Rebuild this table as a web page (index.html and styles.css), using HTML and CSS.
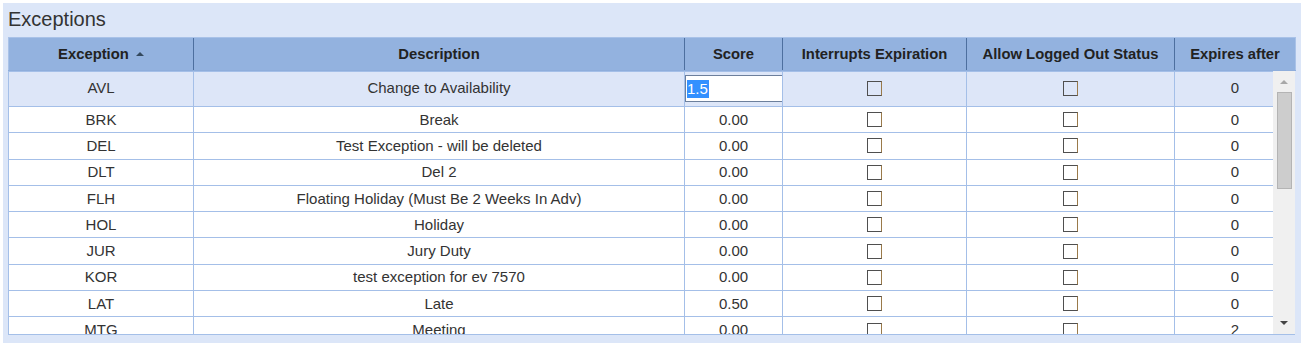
FILE: index.html
```html
<!DOCTYPE html>
<html>
<head>
<meta charset="utf-8">
<link rel="stylesheet" href="styles.css">
</head>
<body>
<div class="panel">
  <div class="title">Exceptions</div>
  <div class="grid">
    <table class="head">
      <colgroup><col class="c1"><col class="c2"><col class="c3"><col class="c4"><col class="c5"><col class="c6"></colgroup>
      <tr>
        <th>Exception <span class="sort"></span></th>
        <th>Description</th>
        <th>Score</th>
        <th>Interrupts Expiration</th>
        <th>Allow Logged Out Status</th>
        <th>Expires after</th>
      </tr>
    </table>
    <div class="body">
      <table class="rows">
        <colgroup><col class="c1"><col class="c2"><col class="c3"><col class="c4"><col class="c5"><col class="c6"></colgroup>
        <tr class="sel">
          <td>AVL</td><td>Change to Availability</td>
          <td class="edit"><div class="input"><span class="hl">1.5</span></div></td>
          <td><span class="cb"></span></td><td><span class="cb"></span></td><td>0</td>
        </tr>
        <tr><td>BRK</td><td>Break</td><td>0.00</td><td><span class="cb"></span></td><td><span class="cb"></span></td><td>0</td></tr>
        <tr><td>DEL</td><td>Test Exception - will be deleted</td><td>0.00</td><td><span class="cb"></span></td><td><span class="cb"></span></td><td>0</td></tr>
        <tr><td>DLT</td><td>Del 2</td><td>0.00</td><td><span class="cb"></span></td><td><span class="cb"></span></td><td>0</td></tr>
        <tr><td>FLH</td><td>Floating Holiday (Must Be 2 Weeks In Adv)</td><td>0.00</td><td><span class="cb"></span></td><td><span class="cb"></span></td><td>0</td></tr>
        <tr><td>HOL</td><td>Holiday</td><td>0.00</td><td><span class="cb"></span></td><td><span class="cb"></span></td><td>0</td></tr>
        <tr><td>JUR</td><td>Jury Duty</td><td>0.00</td><td><span class="cb"></span></td><td><span class="cb"></span></td><td>0</td></tr>
        <tr><td>KOR</td><td>test exception for ev 7570</td><td>0.00</td><td><span class="cb"></span></td><td><span class="cb"></span></td><td>0</td></tr>
        <tr><td>LAT</td><td>Late</td><td>0.50</td><td><span class="cb"></span></td><td><span class="cb"></span></td><td>0</td></tr>
        <tr><td>MTG</td><td>Meeting</td><td>0.00</td><td><span class="cb"></span></td><td><span class="cb"></span></td><td>2</td></tr>
      </table>
      <div class="scrollbar">
        <span class="arrow up"></span>
        <div class="thumb"></div>
        <span class="arrow down"></span>
      </div>
    </div>
  </div>
</div>
</body>
</html>
```

FILE: styles.css
```css
html, body {
  margin: 0;
  padding: 0;
  background: #ffffff;
}
body {
  padding: 3px 4px 3px 3px;
  font-family: "Liberation Sans", Arial, sans-serif;
  color: #333333;
}
.panel {
  background: #dce6f8;
  padding: 0 6px 8px 5px;
  height: 340px;
  box-sizing: border-box;
}
.title {
  font-size: 20px;
  line-height: 22px;
  padding-top: 5px;
  margin-bottom: 7px;
  color: #333333;
}
.grid {
  width: 1287px;
}
table {
  border-collapse: collapse;
  table-layout: fixed;
  width: 1287px;
}
col.c1 { width: 185px; }
col.c2 { width: 491px; }
col.c3 { width: 98px; }
col.c4 { width: 184px; }
col.c5 { width: 208px; }
col.c6 { width: 121px; }

.head th {
  background: #93b2df;
  height: 32px;
  padding: 0;
  font-size: 14.8px;
  font-weight: bold;
  color: #222222;
  text-align: center;
  border-left: 1px solid #4d6f9f;
  border-top: 1px solid #a9c2e8;
  border-bottom: 1px solid #8eaddb;
  white-space: nowrap;
}
.head th:first-child {
  border-left: 1px solid #a9c2e8;
}
.head th:last-child {
  border-right: 1px solid #a9c2e8;
}
.sort {
  display: inline-block;
  width: 0;
  height: 0;
  border-left: 4px solid transparent;
  border-right: 4px solid transparent;
  border-bottom: 4px solid #34495e;
  vertical-align: middle;
  margin-left: 3px;
  margin-top: -2px;
}

.body {
  position: relative;
  height: 263px;
  overflow: hidden;
  background: #ffffff;
  border-bottom: 1px solid #a4bfe8;
}
.rows td {
  height: 25.3px;
  padding: 0;
  font-size: 15px;
  text-align: center;
  color: #333333;
  border: 1px solid #a4bfe8;
  white-space: nowrap;
  line-height: 16px;
}
.rows tr.sel td {
  height: 32px;
  padding-bottom: 2px;
  background: #dde6f8;
}
.rows tr.sel td.edit {
  padding-bottom: 1px;
}
.input {
  box-sizing: border-box;
  width: 98px;
  height: 27px;
  background: #ffffff;
  border: 1px solid #6c7f9c;
  text-align: left;
  padding: 3px 0 0 1px;
  font-size: 15px;
  line-height: 19px;
}
.hl {
  background: #3390ff;
  color: #ffffff;
  padding: 0 1px 1px 0;
}
.cb {
  display: inline-block;
  width: 15px;
  height: 15px;
  box-sizing: border-box;
  border: 1px solid #4f4f4f;
  border-right-color: #9a7a4a;
  vertical-align: middle;
  margin-top: -2px;
}

.scrollbar {
  position: absolute;
  top: 0;
  right: 0;
  width: 22px;
  height: 263px;
  background: #f0f0f0;
  display: flex;
  flex-direction: column;
  align-items: center;
}
.arrow {
  display: block;
  width: 0;
  height: 0;
  border-left: 4px solid transparent;
  border-right: 4px solid transparent;
}
.arrow.up {
  border-bottom: 4px solid #a8a8a8;
  margin-top: 9px;
}
.arrow.down {
  border-top: 4px solid #444444;
  margin-top: auto;
  margin-bottom: 9px;
}
.thumb {
  width: 15px;
  height: 97px;
  margin-top: 8px;
  background: #cdcdcd;
  border: 1px solid #b4b4b4;
  box-sizing: border-box;
}
```
